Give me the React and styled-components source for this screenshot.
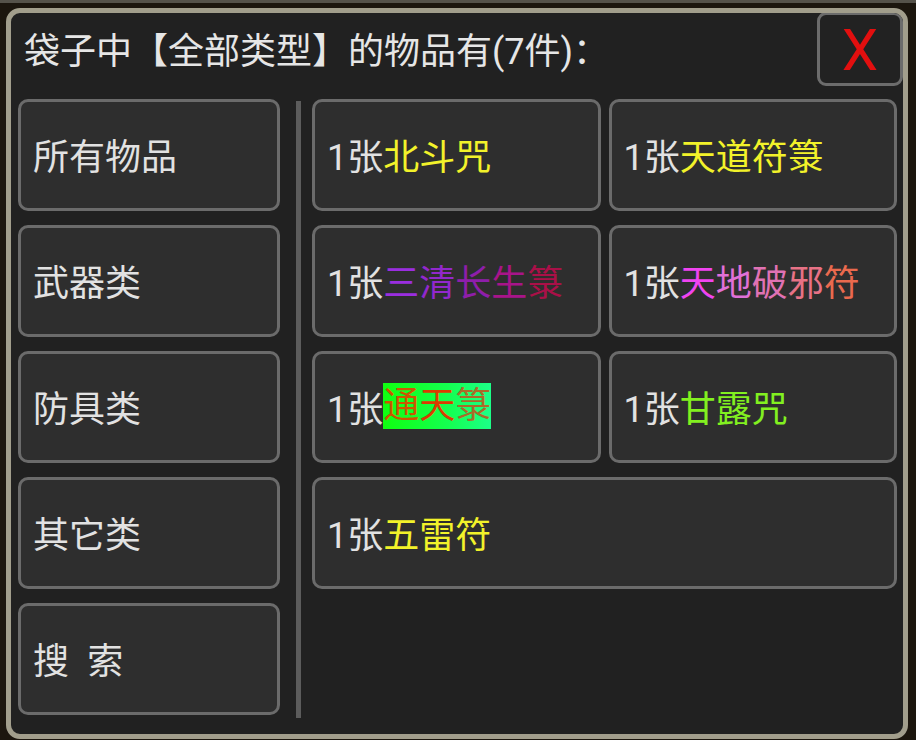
import React from "react";
import styled, { createGlobalStyle } from "styled-components";

const Global = createGlobalStyle`
  html, body { margin: 0; padding: 0; background: #1c160e; }
  body { font-family: Roboto, "Noto Sans CJK SC", sans-serif; }
  #root { width: 916px; height: 740px; overflow: hidden; }
`;

const Page = styled.div`
  width: 916px;
  height: 740px;
  box-sizing: border-box;
  border-top: 3px solid #55524a;
  padding: 5px 8px 1px 6px;
  background: #1c160e;
`;

const Panel = styled.div`
  box-sizing: border-box;
  height: 731px;
  border: 5px solid #a29e8c;
  border-radius: 14px;
  background: #212121;
  display: flex;
  flex-direction: column;
  overflow: hidden;
`;

const Header = styled.div`
  display: flex;
  align-items: center;
  justify-content: space-between;
  height: 74px;
  margin-top: -1px;
`;

const Title = styled.div`
  padding-left: 13px;
  font-size: 36px;
  color: #e6e6e6;
  white-space: nowrap;
  line-height: 1;
  margin-top: 6px;
`;

const CloseButton = styled.div`
  box-sizing: border-box;
  width: 86px;
  height: 74px;
  border: 3px solid #6c6c6c;
  border-radius: 9px;
  background: #222222;
  display: flex;
  align-items: center;
  justify-content: center;
  color: #e20f0f;
  font-family: Roboto, sans-serif;
  font-size: 58px;
  line-height: 1;
  padding-top: 2px;
`;

const Body = styled.div`
  display: flex;
  margin-top: 13px;
  padding-left: 7px;
  padding-right: 6px;
`;

const Sidebar = styled.div`
  width: 262px;
  display: grid;
  grid-template-rows: repeat(5, 112px);
  row-gap: 14px;
`;

const Divider = styled.div`
  width: 5px;
  margin: 2px 11px 0 16px;
  height: 617px;
  background: #5c5c5c;
`;

const Grid = styled.div`
  flex: 1;
  display: grid;
  grid-template-columns: 1fr 1fr;
  grid-auto-rows: 112px;
  column-gap: 8px;
  row-gap: 14px;
  align-content: start;
`;

const Tile = styled.div`
  box-sizing: border-box;
  border: 3px solid #6b6b6b;
  border-radius: 10px;
  background: #2e2e2e;
  display: flex;
  align-items: center;
  padding-left: ${(p) => p.$pad || 12}px;
  padding-bottom: 3px;
  font-size: 36px;
  color: #e2e2e2;
  white-space: nowrap;
  grid-column: ${(p) => (p.$wide ? "1 / span 2" : "auto")};
`;

const C = styled.span`
  color: ${(p) => p.$c};
`;

const Highlight = styled.span`
  display: inline-block;
  height: 46px;
  line-height: 46px;
  background: linear-gradient(90deg, #10ff10 0%, #14ff50 60%, #1cff88 100%);
`;

const Colored = ({ text, colors }) =>
  text.split("").map((ch, i) => (
    <C key={i} $c={colors[i] || colors[colors.length - 1]}>
      {ch}
    </C>
  ));

const YELLOW = "#f2f22a";

const items = [
  { name: "北斗咒", colors: [YELLOW] },
  { name: "天道符箓", colors: [YELLOW] },
  {
    name: "三清长生箓",
    colors: ["#9a2ee0", "#9228cc", "#8e1eaa", "#a8148a", "#aa1048"],
  },
  {
    name: "天地破邪符",
    colors: ["#f044f0", "#e070d8", "#e072b4", "#e87286", "#ea6a4e"],
  },
  { name: "通天箓", colors: ["#cc5600", "#da3c00", "#aa6a28"], hl: true },
  { name: "甘露咒", colors: ["#82f020"] },
  { name: "五雷符", colors: [YELLOW], wide: true },
];

const categories = ["所有物品", "武器类", "防具类", "其它类", "搜\u2002索"];

export default function App() {
  return (
    <>
      <Global />
      <Page>
        <Panel>
          <Header>
            <Title>袋子中【全部类型】的物品有(7件)：</Title>
            <CloseButton>X</CloseButton>
          </Header>
          <Body>
            <Sidebar>
              {categories.map((c) => (
                <Tile key={c} $pad={12}>
                  {c}
                </Tile>
              ))}
            </Sidebar>
            <Divider />
            <Grid>
              {items.map((it) => (
                <Tile key={it.name} $wide={it.wide} $pad={12}>
                  1张
                  {it.hl ? (
                    <Highlight>
                      <Colored text={it.name} colors={it.colors} />
                    </Highlight>
                  ) : (
                    <Colored text={it.name} colors={it.colors} />
                  )}
                </Tile>
              ))}
            </Grid>
          </Body>
        </Panel>
      </Page>
    </>
  );
}
